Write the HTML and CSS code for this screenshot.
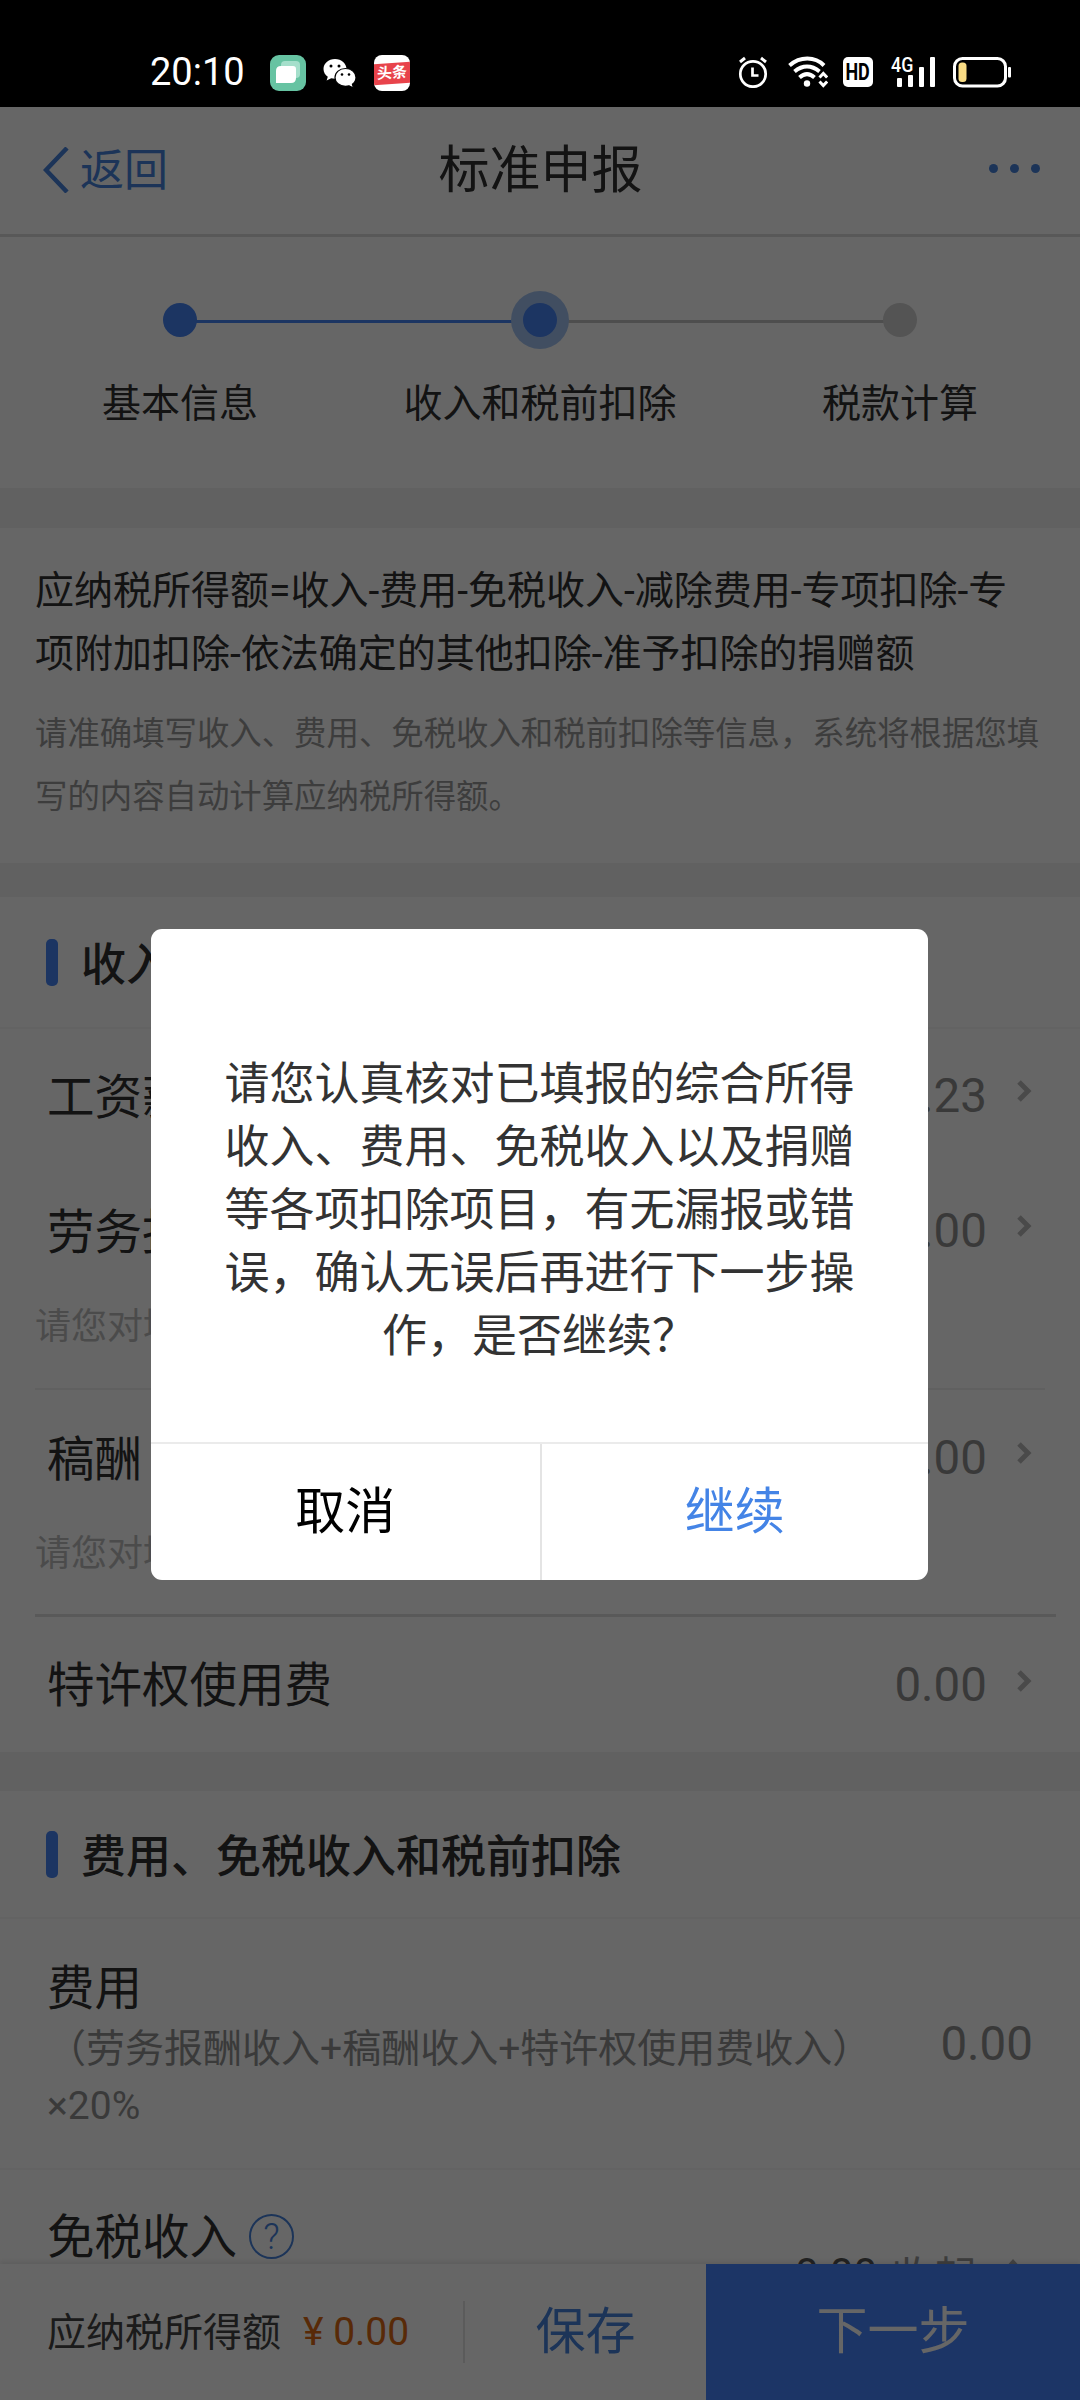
FILE: index.html
```html
<!DOCTYPE html>
<html lang="zh-CN">
<head>
<meta charset="utf-8">
<title>标准申报</title>
<link rel="stylesheet" href="styles.css">
</head>
<body>
<div class="screen">
  <header class="status">
    <span class="clock">20:10</span>
    <div class="apps">
      <svg width="36" height="36" viewBox="0 0 36 36"><rect width="36" height="36" rx="9" fill="#66c3a2"/><rect x="11" y="6" width="19" height="17" rx="4" fill="#a5dfcb"/><path d="M6 16q0-5 5-5h12q3 0 3 3v9q0 5-5 5H6z" fill="#fff"/></svg>
      <svg width="34" height="36" viewBox="0 0 34 36"><path d="M12 4C5.400 4 .5 8.500.5 14c0 3.300 1.700 6 4.300 7.800L3.600 25.500l4.600-2.200c1.200.3 2.500.4 3.800.4 6.500 0 11.500-4.300 11.500-9.700S18.500 4 12 4z" fill="#fff"/><path d="M22.500 13.500c-6 0-10.500 4-10.500 9s4.500 8.800 10.500 8.800c1.300 0 2.500-.2 3.600-.5l4.400 2.200-1.100-3.700c2.200-1.700 3.600-4 3.600-6.800 0-5-4.600-9-10.500-9z" fill="#fff" stroke="#000" stroke-width="1.200"/><circle cx="8" cy="11" r="1.500"/><circle cx="16" cy="11" r="1.500"/><circle cx="19" cy="19.500" r="1.300"/><circle cx="26" cy="19.500" r="1.300"/></svg>
      <span class="toutiao"><b>头条</b></span>
    </div>
    <div class="system">
      <svg width="30" height="32" viewBox="0 0 30 32" fill="none" stroke="#fff"><circle cx="15" cy="18" r="12.700" stroke-width="2.700"/><path d="M2 6l5-4M28 6l-5-4" stroke-width="3"/><path d="M14.500 11.500v8h6" stroke-width="2.700"/></svg>
      <svg width="40" height="32" viewBox="0 0 40 32" fill="none" stroke="#fff" stroke-width="4"><path d="M1.500 9.500C12 .2 27 .2 36 9.500"/><path d="M6.500 15.500c8-6.600 17-6.600 25 0"/><path d="M11.500 21.500c5-4.500 10-4.500 15 0"/><circle cx="19" cy="27.500" r="3.200" fill="#fff" stroke="none"/><path d="M31.500 21.500l3.800-4 3.800 4M31.500 25.500l3.800 4 3.800-4" stroke-width="3"/></svg>
      <span class="hd"><b>HD</b></span>
      <span class="cell"><small>4G</small><svg width="38" height="30" viewBox="0 0 38 30" fill="#fff"><rect y="21" width="5" height="9" rx="1"/><rect x="11" y="18" width="5" height="12" rx="1"/><rect x="22" y="10" width="5" height="20" rx="1"/><rect x="33" width="5" height="30" rx="1"/></svg></span>
      <svg width="60" height="32" viewBox="0 0 60 32"><rect x="3.500" y="2.500" width="51" height="27.500" rx="8" fill="none" stroke="#fff" stroke-width="3"/><rect x="7.500" y="6.500" width="8" height="19.500" rx="3.500" fill="#f9dc84"/><rect x="57" y="11" width="3" height="10.500" rx="1" fill="#fff"/></svg>
    </div>
  </header>

  <nav class="nav">
    <a class="back"><svg width="26" height="46" viewBox="0 0 26 46" fill="none" stroke="#4682dc" stroke-width="4.500"><path d="M24 1L3 23l21 22"/></svg><span>返回</span></a>
    <h1>标准申报</h1>
    <span class="more"><i></i><i></i><i></i></span>
  </nav>

  <section class="steps">
    <div class="step done"><i></i><span>基本信息</span></div>
    <div class="step current"><i></i><span>收入和税前扣除</span></div>
    <div class="step"><i></i><span>税款计算</span></div>
  </section>

  <section class="info">
    <p class="formula">应纳税所得额=收入-费用-免税收入-减除费用-专项扣除-专<br>项附加扣除-依法确定的其他扣除-准予扣除的捐赠额</p>
    <p class="tip">请准确填写收入、费用、免税收入和税前扣除等信息，系统将根据您填<br>写的内容自动计算应纳税所得额。</p>
  </section>

  <section class="group">
    <h2>收入</h2>
    <div class="row salary"><span>工资薪金</span><em>0.23</em><svg class="arrow" viewBox="0 0 16 22"><path d="M3 2l9 9-9 9"/></svg></div>
    <div class="row"><span>劳务报酬</span><em>0.00</em><svg class="arrow" viewBox="0 0 16 22"><path d="M3 2l9 9-9 9"/></svg></div>
    <p class="note">请您对填</p>
    <div class="row"><span>稿酬</span><em>0.00</em><svg class="arrow" viewBox="0 0 16 22"><path d="M3 2l9 9-9 9"/></svg></div>
    <p class="note strong">请您对填</p>
    <div class="row last"><span>特许权使用费</span><em>0.00</em><svg class="arrow" viewBox="0 0 16 22"><path d="M3 2l9 9-9 9"/></svg></div>
  </section>

  <section class="group deductions">
    <h2>费用、免税收入和税前扣除</h2>
    <div class="cost">
      <div><span>费用</span><p>（劳务报酬收入+稿酬收入+特许权使用费收入）<br>×20%</p></div>
      <em>0.00</em>
    </div>
    <div class="exempt">
      <span>免税收入</span>
      <b class="help">?</b>
      <div class="fold"><em>0.00</em><span>收起</span><svg width="20" height="14" viewBox="0 0 20 14"><path d="M2 12l8-9 8 9"/></svg></div>
    </div>
  </section>

  <footer class="bar">
    <span class="label">应纳税所得额</span>
    <span class="amount">¥ 0.00</span>
    <a class="save">保存</a>
    <a class="next">下一步</a>
  </footer>

  <div class="mask">
    <div class="dialog">
      <p>请您认真核对已填报的综合所得<br>收入、费用、免税收入以及捐赠<br>等各项扣除项目，有无漏报或错<br>误，确认无误后再进行下一步操<br>作，是否继续？</p>
      <div class="actions"><a>取消</a><a class="primary">继续</a></div>
    </div>
  </div>
</div>
</body>
</html>
```
FILE: styles.css
```css
* { box-sizing: border-box; margin: 0; padding: 0; }
body {
  background: #000;
  font-family: Roboto, "Noto Sans CJK SC", sans-serif;
  color: #303030;
}
.screen {
  position: relative;
  width: 1080px;
  height: 2400px;
  overflow: hidden;
  background: #f3f3f3;
  white-space: nowrap;
}
em, i { font-style: normal; }

/* status bar */
.status {
  display: flex;
  align-items: flex-start;
  height: 107px;
  padding: 55px 69px 0 150px;
  background: #000;
  color: #fff;
}
.clock { width: 120px; font-size: 38px; line-height: 35px; }
.apps { display: flex; gap: 17px; }
.toutiao {
  display: flex;
  align-items: center;
  width: 36px;
  height: 36px;
  border-radius: 8px;
  overflow: hidden;
  background: #fff;
}
.toutiao b {
  width: 36px;
  font-size: 15px;
  line-height: 21px;
  text-align: center;
  background: #e8434b;
  transform: skewY(-4deg);
}
.system { display: flex; align-items: center; margin-left: auto; height: 34px; }
.system > svg:first-child { margin-right: 20px; }
.hd {
  display: flex;
  justify-content: center;
  width: 30px;
  height: 30px;
  margin: 0 18px 0 15px;
  border-radius: 5px;
  background: #fff;
  color: #000;
}
.hd b { font-size: 23px; line-height: 31px; transform: scaleX(.78); }
.cell { position: relative; display: flex; width: 44px; margin-right: 16px; justify-content: flex-end; }
.cell small {
  position: absolute;
  left: 0;
  top: -1px;
  font-size: 21px;
  font-weight: 500;
  line-height: 18px;
  transform: scaleX(.85);
  transform-origin: left;
}

/* title bar */
.nav {
  display: grid;
  grid-template-columns: 1fr auto 1fr;
  align-items: center;
  height: 130px;
  padding: 0 40px 0 43px;
  background: #fff;
  border-bottom: 3px solid #dcdcdc;
}
.back { display: flex; align-items: center; gap: 11px; margin-bottom: 2px; font-size: 44px; color: #4682dc; }
.back span { margin-bottom: 5px; }
.nav h1 { margin-right: 2px; font-size: 51px; font-weight: 400; line-height: 80px; }
.more { display: flex; justify-content: flex-end; gap: 12px; padding-bottom: 5px; }
.more i { width: 9px; height: 9px; border-radius: 50%; background: #4682dc; }

/* steps */
.steps { display: grid; grid-template-columns: repeat(3, 1fr); height: 251px; padding-top: 54px; background: #fff; }
.step { position: relative; display: flex; flex-direction: column; align-items: center; font-size: 39px; }
.step i { position: relative; z-index: 1; width: 34px; height: 34px; margin: 12px 0; border-radius: 50%; background: #d2d2d2; }
.step.done i { background: #4684f5; }
.step.current i { z-index: 2; background: #4684f5; box-shadow: 0 0 0 12px #a4c4f2; }
.step span { margin-top: 25px; line-height: 60px; }
.step:not(:last-child)::before {
  content: "";
  position: absolute;
  left: 50%;
  top: 29px;
  width: 100%;
  height: 3px;
  background: #c4c4c4;
}
.step.done::before { background: #4684f5; }

/* formula */
.info { height: 335px; margin-top: 40px; padding: 32px 35px 0; background: #fff; }
.formula { font-size: 39px; line-height: 63px; }
.tip { margin-top: 17px; font-size: 32.400px; line-height: 63px; color: #9a9a9a; }

/* groups */
.group { margin-top: 34px; background: #fff; }
.group h2 {
  display: flex;
  align-items: center;
  gap: 23px;
  height: 132px;
  padding: 0 0 2px 46px;
  border-bottom: 2px solid #f7f7f7;
  font-size: 45px;
  font-weight: 500;
}
.group h2::before { content: ""; width: 12px; height: 47px; margin-top: 3px; border-radius: 5px; background: #4684f5; }
.row { display: flex; align-items: center; height: 136px; padding: 0 48px 0 47px; font-size: 47.500px; }
.row.salary { height: 134px; }
.row span { margin-bottom: 6px; }
.row em { margin-left: auto; }
.row em, .cost em { color: #8f8f8f; }
.arrow { width: 16px; height: 22px; margin: 0 0 10px 29px; fill: none; stroke: #bababa; stroke-width: 5; }
.row.last .arrow { margin-bottom: 8px; }
.note { height: 91px; margin: 0 35px; border-bottom: 2px solid #f0f0f0; font-size: 36px; line-height: 57px; color: #bcbcbc; }
.note.strong { height: 91px; margin-right: 24px; border-bottom: 3px solid #dedede; }
.row.last { height: 135px; }
.deductions { margin-top: 39px; }
.deductions h2 { height: 128px; }
.cost {
  display: flex;
  align-items: center;
  justify-content: space-between;
  height: 251px;
  padding: 0 47px;
  border-bottom: 2px solid #f7f7f7;
  font-size: 47.500px;
}
.cost > div { padding-top: 4px; line-height: 64px; }
.cost p { font-size: 39px; line-height: 57px; color: #929292; }
.exempt { display: flex; height: 133px; align-items: center; padding: 0 47px; font-size: 47.500px; }
.exempt > span { margin-bottom: 6px; }
.help {
  width: 45px;
  height: 45px;
  margin-left: 12px;
  border: 2px solid #4682dc;
  border-radius: 50%;
  font: 300 36px/42px Roboto, sans-serif;
  text-align: center;
  color: #4682dc;
}
.fold { display: flex; align-items: center; gap: 14px; margin: 74px 10px 0 auto; font-size: 43px; color: #999; }
.fold em { font-size: 42px; color: #555; }
.fold svg { margin: -16px 0 0 12px; fill: none; stroke: #a8a8a8; stroke-width: 4; }

/* bottom bar */
.bar {
  position: absolute;
  left: 0;
  bottom: 0;
  display: flex;
  align-items: center;
  width: 100%;
  height: 136px;
  padding-left: 47px;
  background: #fff;
  box-shadow: 0 -3px 4px rgba(0, 0, 0, .08);
  font-size: 39px;
}
.label { width: 256px; padding-bottom: 6px; color: #444; }
.amount { width: 160px; font-size: 39px; color: #dc6a14; }
.save {
  flex: 1;
  height: 62px;
  border-left: 2px solid #e4e4e4;
  font-size: 50px;
  line-height: 62px;
  text-align: center;
  color: #4682dc;
}
.next { width: 374px; background: #4684ff; font-size: 51px; line-height: 136px; text-align: center; color: #fff; }

/* dialog */
.mask {
  position: absolute;
  z-index: 10;
  inset: 107px 0 0;
  padding: 822px 152px 0 151px;
  background: rgba(0, 0, 0, .6);
}
.dialog { height: 651px; border-radius: 11px; background: #fff; overflow: hidden; }
.dialog p { height: 513px; padding-top: 124px; font-size: 45px; line-height: 63px; text-align: center; color: #333; }
.actions { display: grid; grid-template-columns: 1fr 1fr; height: 138px; border-top: 2px solid #ebebeb; }
.actions a { font-size: 50px; line-height: 137px; text-align: center; color: #000; }
.actions .primary { border-left: 2px solid #e4e4e4; color: #4484e6; }
```
